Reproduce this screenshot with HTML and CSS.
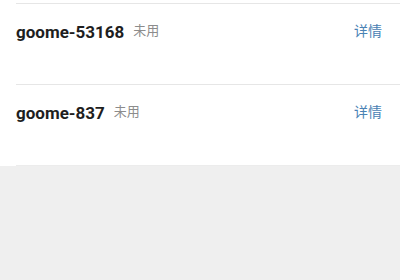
FILE: index.html
```html
<!DOCTYPE html>
<html>
<head>
<meta charset="utf-8">
<link rel="stylesheet" href="styles.css">
</head>
<body>
<div class="list">
  <div class="row">
    <div class="info"><span class="name">goome-53168</span><span class="status">未用</span></div>
    <a class="detail">详情</a>
  </div>
  <div class="row">
    <div class="info"><span class="name">goome-837</span><span class="status">未用</span></div>
    <a class="detail">详情</a>
  </div>
  <div class="end"></div>
</div>
</body>
</html>
```
FILE: styles.css
```css
html, body {
  margin: 0;
  padding: 0;
  background: #efefef;
  font-family: Roboto, "Noto Sans CJK SC", sans-serif;
}
.list {
  background: #fff;
  padding-top: 3px;
}
.row {
  margin-left: 16px;
  border-top: 1px solid #e6e6e6;
  height: 80px;
  display: flex;
  align-items: flex-start;
  justify-content: space-between;
  padding-right: 18px;
}
.info {
  display: flex;
  align-items: center;
  margin-top: 16px;
  height: 24px;
}
.name {
  font-weight: bold;
  font-size: 17px;
  line-height: 24px;
  color: #1e1e1e;
}
.status {
  font-size: 13px;
  line-height: 18px;
  color: #8c8c8c;
  margin-left: 9px;
  margin-top: -2px;
}
.detail {
  margin-top: 16px;
  line-height: 22px;
  font-size: 14px;
  color: #4a82b4;
}
.end {
  margin-left: 16px;
  border-top: 1px solid #ececec;
}
```
